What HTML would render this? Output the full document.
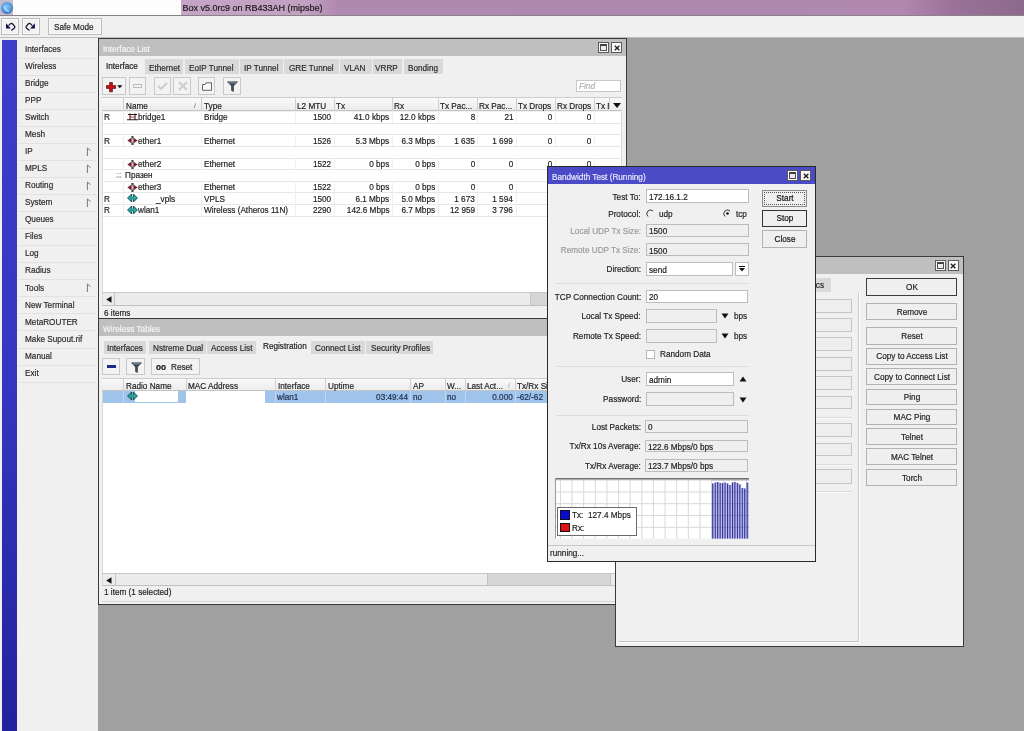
<!DOCTYPE html><html><head><meta charset="utf-8"><style>
*{margin:0;padding:0;box-sizing:border-box}
html,body{width:1024px;height:731px;overflow:hidden;background:#a0a0a0}
body{filter:blur(0.35px)}
body{position:relative;font-family:"Liberation Sans",sans-serif;font-size:9.5px;color:#1e1e1e}
.a{position:absolute}
.t{line-height:12px;white-space:nowrap;transform:scaleX(.862);transform-origin:0 0;-webkit-text-stroke:0.2px currentColor}
.btn{background:#f2f2f2;border:1px solid #bcbcbc;box-shadow:inset 0 0 0 1px #fafafa}
.inp{background:#fff;border:1px solid #b4b4b4}
.inpd{background:#efefef;border:1px solid #b4b4b4}
.tab{background:#dcdcdc}
.gray{color:#8a8a8a}
</style></head><body><div class="a" style="left:0;top:0;width:1024px;height:15px;background:linear-gradient(90deg,#c9aac9 0%,#c2a0c2 30%,#b089b0 33%,#ae88ae 60%,#b088b0 88%,#9a729a 93%,#8c6a8c 100%)"></div>
<div class="a " style="left:13px;top:0px;width:168px;height:14.5px;background:#fdfdfd"></div>
<div class="a " style="left:0px;top:0px;width:13px;height:14.5px;background:#c4bccc"></div>
<div class="a" style="left:1px;top:1.6px;width:11.7px;height:12.1px;border-radius:50%;background:radial-gradient(circle at 45% 40%,#8cc8f6 0%,#5a9ee6 45%,#2a62b8 80%,#1d4c98 100%)"></div>
<svg class="a" style="left:1px;top:1.6px" width="12" height="12" viewBox="0 0 12 12"><path d="M3 4 Q4 8 8 9.5" stroke="#c8ecff" stroke-width="1.2" fill="none" opacity="0.8"/></svg>
<div class="a t " style="left:182.5px;top:1.71px;font-size:9px;transform:none;color:#202020">Box v5.0rc9 on RB433AH (mipsbe)</div>
<div class="a " style="left:0px;top:14.5px;width:1024px;height:1.5px;background:#8a828a"></div>
<div class="a " style="left:0px;top:16px;width:1024px;height:22px;background:#f0f0f0"></div>
<div class="a btn" style="left:1.1px;top:18.1px;width:18px;height:17.2px;"></div>
<div class="a btn" style="left:21.9px;top:18.1px;width:17.9px;height:17.2px;"></div>
<div class="a btn" style="left:47.8px;top:18.2px;width:54px;height:17.2px;"></div>
<div class="a t " style="left:53.7px;top:20.71px;color:#222">Safe Mode</div>
<svg class="a" style="left:0;top:14px" width="44" height="26" viewBox="0 14 44 26"><path d="M6 23.3 L6 28.4 L10.8 28.4 Z" fill="#10104a"/><path d="M8.6 25.6 Q10.6 22.6 12.2 23.6 L14.8 26.6 Q15 27.4 14.2 28.2 L11.4 30.4" stroke="#1a1a40" stroke-width="1.3" fill="none"/><path d="M34.9 23.3 L34.9 28.4 L30.1 28.4 Z" fill="#10104a"/><path d="M32.3 25.6 Q30.3 22.6 28.7 23.6 L26.1 26.6 Q25.9 27.4 26.7 28.2 L29.5 30.4" stroke="#1a1a40" stroke-width="1.3" fill="none"/></svg>
<div class="a " style="left:0px;top:37px;width:1024px;height:1px;background:#bdbdbd"></div>
<div class="a " style="left:0px;top:38px;width:98px;height:693px;background:#f0f0f0"></div>
<div class="a" style="left:2px;top:40px;width:15px;height:691px;background:linear-gradient(180deg,#3e3ec8 0%,#3535c0 50%,#22229e 100%)"></div>
<div class="a t " style="left:25px;top:42.71px;color:#2a2a2a">Interfaces</div>
<div class="a " style="left:18px;top:57.5px;width:78px;height:1px;background:#e2e2e2"></div>
<div class="a t " style="left:25px;top:59.77px;color:#2a2a2a">Wireless</div>
<div class="a " style="left:18px;top:74.56px;width:78px;height:1px;background:#e2e2e2"></div>
<div class="a t " style="left:25px;top:76.83px;color:#2a2a2a">Bridge</div>
<div class="a " style="left:18px;top:91.62px;width:78px;height:1px;background:#e2e2e2"></div>
<div class="a t " style="left:25px;top:93.89px;color:#2a2a2a">PPP</div>
<div class="a " style="left:18px;top:108.68px;width:78px;height:1px;background:#e2e2e2"></div>
<div class="a t " style="left:25px;top:110.95px;color:#2a2a2a">Switch</div>
<div class="a " style="left:18px;top:125.74000000000001px;width:78px;height:1px;background:#e2e2e2"></div>
<div class="a t " style="left:25px;top:128.01px;color:#2a2a2a">Mesh</div>
<div class="a " style="left:18px;top:142.8px;width:78px;height:1px;background:#e2e2e2"></div>
<div class="a t " style="left:25px;top:145.07px;color:#2a2a2a">IP</div>
<div class="a " style="left:18px;top:159.85999999999999px;width:78px;height:1px;background:#e2e2e2"></div>
<svg class="a" style="left:86px;top:147.0px" width="5" height="9" viewBox="0 0 5 9"><path d="M1.4 9 V1 L4.5 3.5" stroke="#6a6a6a" stroke-width="0.9" fill="none"/></svg>
<div class="a t " style="left:25px;top:162.13px;color:#2a2a2a">MPLS</div>
<div class="a " style="left:18px;top:176.92px;width:78px;height:1px;background:#e2e2e2"></div>
<svg class="a" style="left:86px;top:164.0px" width="5" height="9" viewBox="0 0 5 9"><path d="M1.4 9 V1 L4.5 3.5" stroke="#6a6a6a" stroke-width="0.9" fill="none"/></svg>
<div class="a t " style="left:25px;top:179.19px;color:#2a2a2a">Routing</div>
<div class="a " style="left:18px;top:193.98px;width:78px;height:1px;background:#e2e2e2"></div>
<svg class="a" style="left:86px;top:181.1px" width="5" height="9" viewBox="0 0 5 9"><path d="M1.4 9 V1 L4.5 3.5" stroke="#6a6a6a" stroke-width="0.9" fill="none"/></svg>
<div class="a t " style="left:25px;top:196.25px;color:#2a2a2a">System</div>
<div class="a " style="left:18px;top:211.04px;width:78px;height:1px;background:#e2e2e2"></div>
<svg class="a" style="left:86px;top:198.1px" width="5" height="9" viewBox="0 0 5 9"><path d="M1.4 9 V1 L4.5 3.5" stroke="#6a6a6a" stroke-width="0.9" fill="none"/></svg>
<div class="a t " style="left:25px;top:213.31px;color:#2a2a2a">Queues</div>
<div class="a " style="left:18px;top:228.1px;width:78px;height:1px;background:#e2e2e2"></div>
<div class="a t " style="left:25px;top:230.37px;color:#2a2a2a">Files</div>
<div class="a " style="left:18px;top:245.16px;width:78px;height:1px;background:#e2e2e2"></div>
<div class="a t " style="left:25px;top:247.43px;color:#2a2a2a">Log</div>
<div class="a " style="left:18px;top:262.21999999999997px;width:78px;height:1px;background:#e2e2e2"></div>
<div class="a t " style="left:25px;top:264.49px;color:#2a2a2a">Radius</div>
<div class="a " style="left:18px;top:279.28px;width:78px;height:1px;background:#e2e2e2"></div>
<div class="a t " style="left:25px;top:281.55px;color:#2a2a2a">Tools</div>
<div class="a " style="left:18px;top:296.34px;width:78px;height:1px;background:#e2e2e2"></div>
<svg class="a" style="left:86px;top:283.4px" width="5" height="9" viewBox="0 0 5 9"><path d="M1.4 9 V1 L4.5 3.5" stroke="#6a6a6a" stroke-width="0.9" fill="none"/></svg>
<div class="a t " style="left:25px;top:298.61px;color:#2a2a2a">New Terminal</div>
<div class="a " style="left:18px;top:313.4px;width:78px;height:1px;background:#e2e2e2"></div>
<div class="a t " style="left:25px;top:315.67px;color:#2a2a2a">MetaROUTER</div>
<div class="a " style="left:18px;top:330.46px;width:78px;height:1px;background:#e2e2e2"></div>
<div class="a t " style="left:25px;top:332.73px;color:#2a2a2a">Make Supout.rif</div>
<div class="a " style="left:18px;top:347.52px;width:78px;height:1px;background:#e2e2e2"></div>
<div class="a t " style="left:25px;top:349.79px;color:#2a2a2a">Manual</div>
<div class="a " style="left:18px;top:364.58px;width:78px;height:1px;background:#e2e2e2"></div>
<div class="a t " style="left:25px;top:366.85px;color:#2a2a2a">Exit</div>
<div class="a " style="left:18px;top:381.64px;width:78px;height:1px;background:#e2e2e2"></div>
<div class="a " style="left:98px;top:38px;width:529px;height:281px;background:#f0f0f0;border:1px solid #3a3a3a"></div>
<div class="a " style="left:99px;top:39px;width:527px;height:16.5px;background:#bfbfbf"></div>
<div class="a t " style="left:102.8px;top:42.81px;color:#f4f4f4">Interface List</div>
<div class="a" style="left:598.2px;top:42.3px;width:11.2px;height:11px;background:#fafafa;border:1px solid #5a5a5a"><div class="a" style="left:1px;top:0.9px;width:7.2px;height:6.8px;border:1px solid #505050;border-top:2px solid #404040;background:#efe8f2"></div></div>
<div class="a" style="left:611.3000000000001px;top:42.3px;width:11.2px;height:11px;background:#fafafa;border:1px solid #5a5a5a"><svg class="a" style="left:1.7px;top:1.6px" width="6.2" height="6" viewBox="0 0 7 7"><path d="M0.8 0.8 L6.2 6.2 M6.2 0.8 L0.8 6.2" stroke="#222" stroke-width="1.6"/></svg></div>
<div class="a t " style="left:106.3px;top:59.61px;color:#1a1a1a">Interface</div>
<div class="a " style="left:145px;top:58.7px;width:38.400000000000006px;height:15.5px;background:#d9d9d9"></div>
<div class="a t " style="left:149px;top:61.81px;color:#2a2a2a">Ethernet</div>
<div class="a " style="left:184.7px;top:58.7px;width:54.10000000000002px;height:15.5px;background:#d9d9d9"></div>
<div class="a t " style="left:188.7px;top:61.81px;color:#2a2a2a">EoIP Tunnel</div>
<div class="a " style="left:240px;top:58.7px;width:43px;height:15.5px;background:#d9d9d9"></div>
<div class="a t " style="left:244px;top:61.81px;color:#2a2a2a">IP Tunnel</div>
<div class="a " style="left:284.4px;top:58.7px;width:54.60000000000002px;height:15.5px;background:#d9d9d9"></div>
<div class="a t " style="left:288.9px;top:61.81px;color:#2a2a2a">GRE Tunnel</div>
<div class="a " style="left:340.4px;top:58.7px;width:31.600000000000023px;height:15.5px;background:#d9d9d9"></div>
<div class="a t " style="left:344.3px;top:61.81px;color:#2a2a2a">VLAN</div>
<div class="a " style="left:372.7px;top:58.7px;width:29.5px;height:15.5px;background:#d9d9d9"></div>
<div class="a t " style="left:375.3px;top:61.81px;color:#2a2a2a">VRRP</div>
<div class="a " style="left:403.5px;top:58.7px;width:39.60000000000002px;height:15.5px;background:#d9d9d9"></div>
<div class="a t " style="left:408px;top:61.81px;color:#2a2a2a">Bonding</div>
<div class="a" style="left:101.8px;top:77.4px;width:24.0px;height:18.1px;background:#f3f3f3;border:1px solid #c9c9c9"><svg class="a" style="left:3.3px;top:3.6px" width="18" height="11" viewBox="0 0 18 11"><path d="M3.6 0.5 H6.4 V3.6 H9.6 V6.4 H6.4 V9.8 H3.6 V6.4 H0.4 V3.6 H3.6 Z" fill="#c81414" stroke="#501010" stroke-width="0.7"/><path d="M11.2 3.2 H16.4 L13.8 6.2 Z" fill="#111"/></svg></div>
<div class="a" style="left:128.5px;top:77.4px;width:17.2px;height:18.1px;background:#f3f3f3;border:1px solid #c9c9c9"><div class="a" style="left:3px;top:5.5px;width:9px;height:4px;border:1px solid #bdbdbd"></div></div>
<div class="a" style="left:153.5px;top:77.4px;width:17.1px;height:18.1px;background:#f3f3f3;border:1px solid #c9c9c9"><svg class="a" style="left:2.5px;top:3px" width="11" height="10" viewBox="0 0 11 10"><path d="M1 5 L4 8 L10 2" stroke="#cfcfcf" stroke-width="2.2" fill="none"/></svg></div>
<div class="a" style="left:173px;top:77.4px;width:18.0px;height:18.1px;background:#f3f3f3;border:1px solid #c9c9c9"><svg class="a" style="left:3.5px;top:3px" width="10" height="10" viewBox="0 0 10 10"><path d="M1 1 L9 9 M9 1 L1 9" stroke="#cfcfcf" stroke-width="2.4" fill="none"/></svg></div>
<div class="a" style="left:198px;top:77.4px;width:17.0px;height:18.1px;background:#f3f3f3;border:1px solid #c9c9c9"><svg class="a" style="left:3px;top:3.5px" width="10" height="9" viewBox="0 0 10 9"><path d="M0.5 2.5 H3 L4 0.8 H9.5 V8.3 H0.5 Z" stroke="#555" stroke-width="0.9" fill="#f8f8f8"/></svg></div>
<div class="a" style="left:223px;top:77.4px;width:17.5px;height:18.1px;background:#f3f3f3;border:1px solid #c9c9c9"><svg class="a" style="left:3px;top:2.5px" width="11" height="11" viewBox="0 0 11 11"><path d="M0.5 0.8 H10.5 L6.5 5 V10.5 L4.5 9.5 V5 Z" fill="#3a4a5a" stroke="#222" stroke-width="0.5"/><path d="M2 1.8 H9" stroke="#9ab" stroke-width="0.8"/></svg></div>
<div class="a " style="left:575.8px;top:79.9px;width:45.4px;height:12.6px;background:#fff;border:1px solid #c8c8c8"></div>
<div class="a t " style="left:579px;top:80.31px;color:#b0b0b0;font-style:italic">Find</div>
<div class="a " style="left:101.8px;top:97.3px;width:520.5px;height:14.2px;background:linear-gradient(#fafafa,#ececec);border-top:1px solid #cdcdcd;border-bottom:1px solid #c4c4c4"></div>
<div class="a " style="left:123.3px;top:98.3px;width:1px;height:12.5px;background:#d0d0d0"></div>
<div class="a " style="left:201.3px;top:98.3px;width:1px;height:12.5px;background:#d0d0d0"></div>
<div class="a " style="left:294.5px;top:98.3px;width:1px;height:12.5px;background:#d0d0d0"></div>
<div class="a " style="left:333.5px;top:98.3px;width:1px;height:12.5px;background:#d0d0d0"></div>
<div class="a " style="left:391.5px;top:98.3px;width:1px;height:12.5px;background:#d0d0d0"></div>
<div class="a " style="left:437.8px;top:98.3px;width:1px;height:12.5px;background:#d0d0d0"></div>
<div class="a " style="left:476.9px;top:98.3px;width:1px;height:12.5px;background:#d0d0d0"></div>
<div class="a " style="left:515.7px;top:98.3px;width:1px;height:12.5px;background:#d0d0d0"></div>
<div class="a " style="left:554.7px;top:98.3px;width:1px;height:12.5px;background:#d0d0d0"></div>
<div class="a " style="left:593.5px;top:98.3px;width:1px;height:12.5px;background:#d0d0d0"></div>
<div class="a " style="left:609.3px;top:98.3px;width:1px;height:12.5px;background:#d0d0d0"></div>
<div class="a t" style="left:595.5px;top:99.7px;width:15.6px;overflow:hidden;color:#222">Tx Bytes</div>
<div class="a t " style="left:125.5px;top:99.71px;color:#222">Name</div>
<div class="a t " style="left:203.5px;top:99.71px;color:#222">Type</div>
<div class="a t " style="left:296.5px;top:99.71px;color:#222">L2 MTU</div>
<div class="a t " style="left:335.5px;top:99.71px;color:#222">Tx</div>
<div class="a t " style="left:393.5px;top:99.71px;color:#222">Rx</div>
<div class="a t " style="left:439.8px;top:99.71px;color:#222">Tx Pac...</div>
<div class="a t " style="left:478.8px;top:99.71px;color:#222">Rx Pac...</div>
<div class="a t " style="left:517.5px;top:99.71px;color:#222">Tx Drops</div>
<div class="a t " style="left:556.5px;top:99.71px;color:#222">Rx Drops</div>
<div class="a t " style="left:194px;top:99.71px;color:#888;font-size:8px">/</div>
<svg class="a" style="left:611.5px;top:102px" width="10" height="7" viewBox="0 0 10 7"><path d="M1 1 H9 L5 6 Z" fill="#111"/></svg>
<div class="a " style="left:609.3px;top:98.3px;width:1px;height:12.5px;background:#d0d0d0"></div>
<div class="a " style="left:101.8px;top:111.5px;width:520.5px;height:181px;background:#fff;border-left:1px solid #d8d8d8;border-right:1px solid #d8d8d8"></div>
<div class="a " style="left:102.5px;top:122.55000000000001px;width:519.8px;height:1px;background:#e6e6e6"></div>
<div class="a " style="left:102.5px;top:134.20000000000002px;width:519.8px;height:1px;background:#e6e6e6"></div>
<div class="a " style="left:102.5px;top:145.85000000000002px;width:519.8px;height:1px;background:#e6e6e6"></div>
<div class="a " style="left:102.5px;top:157.5px;width:519.8px;height:1px;background:#e6e6e6"></div>
<div class="a " style="left:102.5px;top:169.15px;width:519.8px;height:1px;background:#e6e6e6"></div>
<div class="a " style="left:102.5px;top:180.8px;width:519.8px;height:1px;background:#e6e6e6"></div>
<div class="a " style="left:102.5px;top:192.45px;width:519.8px;height:1px;background:#e6e6e6"></div>
<div class="a " style="left:102.5px;top:204.10000000000002px;width:519.8px;height:1px;background:#e6e6e6"></div>
<div class="a " style="left:102.5px;top:215.75px;width:519.8px;height:1px;background:#e6e6e6"></div>
<div class="a " style="left:123.3px;top:111.4px;width:1px;height:11.65px;background:#efefef"></div>
<div class="a " style="left:201.3px;top:111.4px;width:1px;height:11.65px;background:#efefef"></div>
<div class="a " style="left:294.5px;top:111.4px;width:1px;height:11.65px;background:#efefef"></div>
<div class="a " style="left:333.5px;top:111.4px;width:1px;height:11.65px;background:#efefef"></div>
<div class="a " style="left:391.5px;top:111.4px;width:1px;height:11.65px;background:#efefef"></div>
<div class="a " style="left:437.8px;top:111.4px;width:1px;height:11.65px;background:#efefef"></div>
<div class="a " style="left:476.9px;top:111.4px;width:1px;height:11.65px;background:#efefef"></div>
<div class="a " style="left:515.7px;top:111.4px;width:1px;height:11.65px;background:#efefef"></div>
<div class="a " style="left:554.7px;top:111.4px;width:1px;height:11.65px;background:#efefef"></div>
<div class="a " style="left:593.5px;top:111.4px;width:1px;height:11.65px;background:#efefef"></div>
<div class="a " style="left:123.3px;top:134.70000000000002px;width:1px;height:11.65px;background:#efefef"></div>
<div class="a " style="left:201.3px;top:134.70000000000002px;width:1px;height:11.65px;background:#efefef"></div>
<div class="a " style="left:294.5px;top:134.70000000000002px;width:1px;height:11.65px;background:#efefef"></div>
<div class="a " style="left:333.5px;top:134.70000000000002px;width:1px;height:11.65px;background:#efefef"></div>
<div class="a " style="left:391.5px;top:134.70000000000002px;width:1px;height:11.65px;background:#efefef"></div>
<div class="a " style="left:437.8px;top:134.70000000000002px;width:1px;height:11.65px;background:#efefef"></div>
<div class="a " style="left:476.9px;top:134.70000000000002px;width:1px;height:11.65px;background:#efefef"></div>
<div class="a " style="left:515.7px;top:134.70000000000002px;width:1px;height:11.65px;background:#efefef"></div>
<div class="a " style="left:554.7px;top:134.70000000000002px;width:1px;height:11.65px;background:#efefef"></div>
<div class="a " style="left:593.5px;top:134.70000000000002px;width:1px;height:11.65px;background:#efefef"></div>
<div class="a " style="left:123.3px;top:158.0px;width:1px;height:11.65px;background:#efefef"></div>
<div class="a " style="left:201.3px;top:158.0px;width:1px;height:11.65px;background:#efefef"></div>
<div class="a " style="left:294.5px;top:158.0px;width:1px;height:11.65px;background:#efefef"></div>
<div class="a " style="left:333.5px;top:158.0px;width:1px;height:11.65px;background:#efefef"></div>
<div class="a " style="left:391.5px;top:158.0px;width:1px;height:11.65px;background:#efefef"></div>
<div class="a " style="left:437.8px;top:158.0px;width:1px;height:11.65px;background:#efefef"></div>
<div class="a " style="left:476.9px;top:158.0px;width:1px;height:11.65px;background:#efefef"></div>
<div class="a " style="left:515.7px;top:158.0px;width:1px;height:11.65px;background:#efefef"></div>
<div class="a " style="left:554.7px;top:158.0px;width:1px;height:11.65px;background:#efefef"></div>
<div class="a " style="left:593.5px;top:158.0px;width:1px;height:11.65px;background:#efefef"></div>
<div class="a " style="left:123.3px;top:181.3px;width:1px;height:11.65px;background:#efefef"></div>
<div class="a " style="left:201.3px;top:181.3px;width:1px;height:11.65px;background:#efefef"></div>
<div class="a " style="left:294.5px;top:181.3px;width:1px;height:11.65px;background:#efefef"></div>
<div class="a " style="left:333.5px;top:181.3px;width:1px;height:11.65px;background:#efefef"></div>
<div class="a " style="left:391.5px;top:181.3px;width:1px;height:11.65px;background:#efefef"></div>
<div class="a " style="left:437.8px;top:181.3px;width:1px;height:11.65px;background:#efefef"></div>
<div class="a " style="left:476.9px;top:181.3px;width:1px;height:11.65px;background:#efefef"></div>
<div class="a " style="left:515.7px;top:181.3px;width:1px;height:11.65px;background:#efefef"></div>
<div class="a " style="left:554.7px;top:181.3px;width:1px;height:11.65px;background:#efefef"></div>
<div class="a " style="left:593.5px;top:181.3px;width:1px;height:11.65px;background:#efefef"></div>
<div class="a " style="left:123.3px;top:192.95px;width:1px;height:11.65px;background:#efefef"></div>
<div class="a " style="left:201.3px;top:192.95px;width:1px;height:11.65px;background:#efefef"></div>
<div class="a " style="left:294.5px;top:192.95px;width:1px;height:11.65px;background:#efefef"></div>
<div class="a " style="left:333.5px;top:192.95px;width:1px;height:11.65px;background:#efefef"></div>
<div class="a " style="left:391.5px;top:192.95px;width:1px;height:11.65px;background:#efefef"></div>
<div class="a " style="left:437.8px;top:192.95px;width:1px;height:11.65px;background:#efefef"></div>
<div class="a " style="left:476.9px;top:192.95px;width:1px;height:11.65px;background:#efefef"></div>
<div class="a " style="left:515.7px;top:192.95px;width:1px;height:11.65px;background:#efefef"></div>
<div class="a " style="left:554.7px;top:192.95px;width:1px;height:11.65px;background:#efefef"></div>
<div class="a " style="left:593.5px;top:192.95px;width:1px;height:11.65px;background:#efefef"></div>
<div class="a " style="left:123.3px;top:204.60000000000002px;width:1px;height:11.65px;background:#efefef"></div>
<div class="a " style="left:201.3px;top:204.60000000000002px;width:1px;height:11.65px;background:#efefef"></div>
<div class="a " style="left:294.5px;top:204.60000000000002px;width:1px;height:11.65px;background:#efefef"></div>
<div class="a " style="left:333.5px;top:204.60000000000002px;width:1px;height:11.65px;background:#efefef"></div>
<div class="a " style="left:391.5px;top:204.60000000000002px;width:1px;height:11.65px;background:#efefef"></div>
<div class="a " style="left:437.8px;top:204.60000000000002px;width:1px;height:11.65px;background:#efefef"></div>
<div class="a " style="left:476.9px;top:204.60000000000002px;width:1px;height:11.65px;background:#efefef"></div>
<div class="a " style="left:515.7px;top:204.60000000000002px;width:1px;height:11.65px;background:#efefef"></div>
<div class="a " style="left:554.7px;top:204.60000000000002px;width:1px;height:11.65px;background:#efefef"></div>
<div class="a " style="left:593.5px;top:204.60000000000002px;width:1px;height:11.65px;background:#efefef"></div>
<div class="a t " style="left:104.3px;top:111.21px;color:#222">R</div>
<svg class="a" style="left:126.5px;top:113.4px" width="11" height="8" viewBox="0 0 11 8"><path d="M1 1.5 H10 M0 6.8 H11 M3 0.5 V6.8 M8 0.5 V6.8" stroke="#3a1414" stroke-width="1.1" fill="none"/><path d="M3.5 4 H7.5" stroke="#b03030" stroke-width="0.9" fill="none"/></svg>
<div class="a t " style="left:137.6px;top:111.21px;color:#222">bridge1</div>
<div class="a t " style="left:203.5px;top:111.21px;color:#222">Bridge</div>
<div class="a t " style="right:692.4px;top:111.21px;text-align:right;transform-origin:100% 0;color:#222">1500</div>
<div class="a t " style="right:634.8px;top:111.21px;text-align:right;transform-origin:100% 0;color:#222">41.0 kbps</div>
<div class="a t " style="right:588.8px;top:111.21px;text-align:right;transform-origin:100% 0;color:#222">12.0 kbps</div>
<div class="a t " style="right:549.2px;top:111.21px;text-align:right;transform-origin:100% 0;color:#222">8</div>
<div class="a t " style="right:510.79999999999995px;top:111.21px;text-align:right;transform-origin:100% 0;color:#222">21</div>
<div class="a t " style="right:471.79999999999995px;top:111.21px;text-align:right;transform-origin:100% 0;color:#222">0</div>
<div class="a t " style="right:432.29999999999995px;top:111.21px;text-align:right;transform-origin:100% 0;color:#222">0</div>
<div class="a t " style="left:104.3px;top:134.51px;color:#222">R</div>
<svg class="a" style="left:126.5px;top:136.20000000000002px" width="11" height="9" viewBox="0 0 11 9"><path d="M0.4 4.5 L4.2 1.8 V7.2 Z" fill="#8a1832"/><path d="M10.6 4.5 L6.8 1.8 V7.2 Z" fill="#8a1832"/><rect x="4.4" y="0" width="2.2" height="9" fill="#404a44"/><rect x="5.0" y="2.5" width="1" height="4" fill="#c8c8c8"/></svg>
<div class="a t " style="left:137.6px;top:134.51px;color:#222">ether1</div>
<div class="a t " style="left:203.5px;top:134.51px;color:#222">Ethernet</div>
<div class="a t " style="right:692.4px;top:134.51px;text-align:right;transform-origin:100% 0;color:#222">1526</div>
<div class="a t " style="right:634.8px;top:134.51px;text-align:right;transform-origin:100% 0;color:#222">5.3 Mbps</div>
<div class="a t " style="right:588.8px;top:134.51px;text-align:right;transform-origin:100% 0;color:#222">6.3 Mbps</div>
<div class="a t " style="right:549.2px;top:134.51px;text-align:right;transform-origin:100% 0;color:#222">1 635</div>
<div class="a t " style="right:510.79999999999995px;top:134.51px;text-align:right;transform-origin:100% 0;color:#222">1 699</div>
<div class="a t " style="right:471.79999999999995px;top:134.51px;text-align:right;transform-origin:100% 0;color:#222">0</div>
<div class="a t " style="right:432.29999999999995px;top:134.51px;text-align:right;transform-origin:100% 0;color:#222">0</div>
<svg class="a" style="left:126.5px;top:159.5px" width="11" height="9" viewBox="0 0 11 9"><path d="M0.4 4.5 L4.2 1.8 V7.2 Z" fill="#8a1832"/><path d="M10.6 4.5 L6.8 1.8 V7.2 Z" fill="#8a1832"/><rect x="4.4" y="0" width="2.2" height="9" fill="#404a44"/><rect x="5.0" y="2.5" width="1" height="4" fill="#c8c8c8"/></svg>
<div class="a t " style="left:137.6px;top:157.81px;color:#222">ether2</div>
<div class="a t " style="left:203.5px;top:157.81px;color:#222">Ethernet</div>
<div class="a t " style="right:692.4px;top:157.81px;text-align:right;transform-origin:100% 0;color:#222">1522</div>
<div class="a t " style="right:634.8px;top:157.81px;text-align:right;transform-origin:100% 0;color:#222">0 bps</div>
<div class="a t " style="right:588.8px;top:157.81px;text-align:right;transform-origin:100% 0;color:#222">0 bps</div>
<div class="a t " style="right:549.2px;top:157.81px;text-align:right;transform-origin:100% 0;color:#222">0</div>
<div class="a t " style="right:510.79999999999995px;top:157.81px;text-align:right;transform-origin:100% 0;color:#222">0</div>
<div class="a t " style="right:471.79999999999995px;top:157.81px;text-align:right;transform-origin:100% 0;color:#222">0</div>
<div class="a t " style="right:432.29999999999995px;top:157.81px;text-align:right;transform-origin:100% 0;color:#222">0</div>
<div class="a t " style="left:116px;top:169.46px;color:#888;font-size:8px">;;;</div>
<div class="a t " style="left:125px;top:169.46px;color:#222">Празен</div>
<svg class="a" style="left:126.5px;top:182.8px" width="11" height="9" viewBox="0 0 11 9"><path d="M0.4 4.5 L4.2 1.8 V7.2 Z" fill="#8a1832"/><path d="M10.6 4.5 L6.8 1.8 V7.2 Z" fill="#8a1832"/><rect x="4.4" y="0" width="2.2" height="9" fill="#404a44"/><rect x="5.0" y="2.5" width="1" height="4" fill="#c8c8c8"/></svg>
<div class="a t " style="left:137.6px;top:181.11px;color:#222">ether3</div>
<div class="a t " style="left:203.5px;top:181.11px;color:#222">Ethernet</div>
<div class="a t " style="right:692.4px;top:181.11px;text-align:right;transform-origin:100% 0;color:#222">1522</div>
<div class="a t " style="right:634.8px;top:181.11px;text-align:right;transform-origin:100% 0;color:#222">0 bps</div>
<div class="a t " style="right:588.8px;top:181.11px;text-align:right;transform-origin:100% 0;color:#222">0 bps</div>
<div class="a t " style="right:549.2px;top:181.11px;text-align:right;transform-origin:100% 0;color:#222">0</div>
<div class="a t " style="right:510.79999999999995px;top:181.11px;text-align:right;transform-origin:100% 0;color:#222">0</div>
<div class="a t " style="left:104.3px;top:192.76px;color:#222">R</div>
<svg class="a" style="left:126.5px;top:192.95px" width="11" height="10" viewBox="0 0 11 10"><path d="M0.6 5 L4.6 1 V9 Z M10.4 5 L6.4 1 V9 Z" fill="#2aa8a0" stroke="#10404a" stroke-width="0.9" stroke-linejoin="round"/><rect x="4.2" y="3.6" width="2.6" height="2.8" fill="#2aa8a0"/></svg>
<div class="a t " style="left:137.6px;top:192.76px;color:#222"></div>
<div class="a t " style="left:203.5px;top:192.76px;color:#222">VPLS</div>
<div class="a t " style="right:692.4px;top:192.76px;text-align:right;transform-origin:100% 0;color:#222">1500</div>
<div class="a t " style="right:634.8px;top:192.76px;text-align:right;transform-origin:100% 0;color:#222">6.1 Mbps</div>
<div class="a t " style="right:588.8px;top:192.76px;text-align:right;transform-origin:100% 0;color:#222">5.0 Mbps</div>
<div class="a t " style="right:549.2px;top:192.76px;text-align:right;transform-origin:100% 0;color:#222">1 673</div>
<div class="a t " style="right:510.79999999999995px;top:192.76px;text-align:right;transform-origin:100% 0;color:#222">1 594</div>
<div class="a t " style="left:156px;top:192.76px;color:#222">_vpls</div>
<div class="a t " style="left:104.3px;top:204.41px;color:#222">R</div>
<svg class="a" style="left:126.5px;top:204.60000000000002px" width="11" height="10" viewBox="0 0 11 10"><path d="M0.6 5 L4.6 1 V9 Z M10.4 5 L6.4 1 V9 Z" fill="#2aa8a0" stroke="#10404a" stroke-width="0.9" stroke-linejoin="round"/><rect x="4.2" y="3.6" width="2.6" height="2.8" fill="#2aa8a0"/></svg>
<div class="a t " style="left:137.6px;top:204.41px;color:#222">wlan1</div>
<div class="a t " style="left:203.5px;top:204.41px;color:#222">Wireless (Atheros 11N)</div>
<div class="a t " style="right:692.4px;top:204.41px;text-align:right;transform-origin:100% 0;color:#222">2290</div>
<div class="a t " style="right:634.8px;top:204.41px;text-align:right;transform-origin:100% 0;color:#222">142.6 Mbps</div>
<div class="a t " style="right:588.8px;top:204.41px;text-align:right;transform-origin:100% 0;color:#222">6.7 Mbps</div>
<div class="a t " style="right:549.2px;top:204.41px;text-align:right;transform-origin:100% 0;color:#222">12 959</div>
<div class="a t " style="right:510.79999999999995px;top:204.41px;text-align:right;transform-origin:100% 0;color:#222">3 796</div>
<div class="a " style="left:101.8px;top:292px;width:520.5px;height:13.5px;background:#ececec;border-top:1px solid #c8c8c8;border-bottom:1px solid #c0c0c0;border-left:1px solid #d8d8d8"></div>
<div class="a " style="left:114.3px;top:293px;width:1px;height:12px;background:#c4c4c4"></div>
<svg class="a" style="left:106px;top:296px" width="6" height="7" viewBox="0 0 6 7"><path d="M0.2 3.5 L5.5 0.3 V6.7 Z" fill="#111"/></svg>
<div class="a " style="left:529.8px;top:293px;width:81px;height:12px;background:#d6d6d6;border-left:1px solid #c4c4c4;border-right:1px solid #c4c4c4"></div>
<div class="a t " style="left:103.7px;top:306.51px;color:#222">6 items</div>
<div class="a " style="left:98px;top:318px;width:529px;height:287px;background:#f0f0f0;border:1px solid #3a3a3a"></div>
<div class="a " style="left:99px;top:319px;width:527px;height:16.5px;background:#bfbfbf"></div>
<div class="a t " style="left:102.8px;top:322.81px;color:#f4f4f4">Wireless Tables</div>
<div class="a" style="left:598.2px;top:322.3px;width:11.2px;height:11px;background:#fafafa;border:1px solid #5a5a5a"><div class="a" style="left:1px;top:0.9px;width:7.2px;height:6.8px;border:1px solid #505050;border-top:2px solid #404040;background:#efe8f2"></div></div>
<div class="a" style="left:611.3000000000001px;top:322.3px;width:11.2px;height:11px;background:#fafafa;border:1px solid #5a5a5a"><svg class="a" style="left:1.7px;top:1.6px" width="6.2" height="6" viewBox="0 0 7 7"><path d="M0.8 0.8 L6.2 6.2 M6.2 0.8 L0.8 6.2" stroke="#222" stroke-width="1.6"/></svg></div>
<div class="a " style="left:103.5px;top:340.5px;width:42.900000000000006px;height:13.300000000000011px;background:#d9d9d9"></div>
<div class="a t " style="left:106.9px;top:341.71px;color:#2a2a2a">Interfaces</div>
<div class="a " style="left:148.8px;top:340.5px;width:57.0px;height:13.300000000000011px;background:#d9d9d9"></div>
<div class="a t " style="left:152.7px;top:341.71px;color:#2a2a2a">Nstreme Dual</div>
<div class="a " style="left:207.4px;top:340.5px;width:48.400000000000006px;height:13.300000000000011px;background:#d9d9d9"></div>
<div class="a t " style="left:211.3px;top:341.71px;color:#2a2a2a">Access List</div>
<div class="a t " style="left:263.3px;top:340.21px;color:#1a1a1a">Registration</div>
<div class="a " style="left:311.25px;top:340.5px;width:53.55000000000001px;height:13.300000000000011px;background:#d9d9d9"></div>
<div class="a t " style="left:314.8px;top:341.71px;color:#2a2a2a">Connect List</div>
<div class="a " style="left:366.4px;top:340.5px;width:66.90000000000003px;height:13.300000000000011px;background:#d9d9d9"></div>
<div class="a t " style="left:371px;top:341.71px;color:#2a2a2a">Security Profiles</div>
<div class="a" style="left:102.4px;top:358.4px;width:17.2px;height:16.9px;background:#f3f3f3;border:1px solid #c9c9c9"><div class="a" style="left:3.5px;top:6px;width:9px;height:3px;background:#1c2a8a"></div></div>
<div class="a" style="left:126.4px;top:358.4px;width:18.2px;height:16.9px;background:#f3f3f3;border:1px solid #c9c9c9"><svg class="a" style="left:3.5px;top:2.5px" width="11" height="11" viewBox="0 0 11 11"><path d="M0.5 0.8 H10.5 L6.5 5 V10.5 L4.5 9.5 V5 Z" fill="#3a4a5a" stroke="#222" stroke-width="0.5"/><path d="M2 1.8 H9" stroke="#9ab" stroke-width="0.8"/></svg></div>
<div class="a" style="left:151.4px;top:358.4px;width:48.9px;height:16.9px;background:#f3f3f3;border:1px solid #c9c9c9"></div>
<div class="a t " style="left:155.8px;top:360.71px;font-weight:bold;color:#111">oo</div>
<div class="a t " style="left:171.4px;top:360.71px;color:#222">Reset</div>
<div class="a " style="left:101.8px;top:378px;width:520.5px;height:12.8px;background:linear-gradient(#fafafa,#ececec);border-top:1px solid #cdcdcd;border-bottom:1px solid #c4c4c4"></div>
<div class="a " style="left:123.3px;top:379px;width:1px;height:11px;background:#d0d0d0"></div>
<div class="a " style="left:185.5px;top:379px;width:1px;height:11px;background:#d0d0d0"></div>
<div class="a " style="left:275px;top:379px;width:1px;height:11px;background:#d0d0d0"></div>
<div class="a " style="left:325px;top:379px;width:1px;height:11px;background:#d0d0d0"></div>
<div class="a " style="left:410.2px;top:379px;width:1px;height:11px;background:#d0d0d0"></div>
<div class="a " style="left:445.4px;top:379px;width:1px;height:11px;background:#d0d0d0"></div>
<div class="a " style="left:464.8px;top:379px;width:1px;height:11px;background:#d0d0d0"></div>
<div class="a " style="left:515.4px;top:379px;width:1px;height:11px;background:#d0d0d0"></div>
<div class="a t " style="left:126.1px;top:379.71px;color:#222">Radio Name</div>
<div class="a t " style="left:188.3px;top:379.71px;color:#222">MAC Address</div>
<div class="a t " style="left:277.8px;top:379.71px;color:#222">Interface</div>
<div class="a t " style="left:328.1px;top:379.71px;color:#222">Uptime</div>
<div class="a t " style="left:412.5px;top:379.71px;color:#222">AP</div>
<div class="a t " style="left:447px;top:379.71px;color:#222">W...</div>
<div class="a t " style="left:467.2px;top:379.71px;color:#222">Last Act...</div>
<div class="a t " style="left:517.3px;top:379.71px;color:#222">Tx/Rx Signal</div>
<div class="a t " style="left:508px;top:379.71px;color:#aaa;font-size:8px">/</div>
<div class="a " style="left:101.8px;top:390.8px;width:520.5px;height:182px;background:#fff;border-left:1px solid #d8d8d8"></div>
<div class="a " style="left:102.5px;top:390.8px;width:520px;height:11.8px;background:#9fc3ea"></div>
<div class="a " style="left:134.7px;top:391px;width:43px;height:10.6px;background:#fff"></div>
<div class="a " style="left:185.5px;top:391px;width:79.3px;height:11.6px;background:#fff"></div>
<svg class="a" style="left:126.5px;top:390.5px" width="11" height="10" viewBox="0 0 11 10"><path d="M0.6 5 L4.6 1 V9 Z M10.4 5 L6.4 1 V9 Z" fill="#2aa8a0" stroke="#10404a" stroke-width="0.9" stroke-linejoin="round"/><rect x="4.2" y="3.6" width="2.6" height="2.8" fill="#2aa8a0"/></svg>
<div class="a t " style="left:277.3px;top:391.21px;color:#1c2c4a">wlan1</div>
<div class="a t " style="right:616px;top:391.21px;text-align:right;transform-origin:100% 0;color:#1c2c4a">03:49:44</div>
<div class="a t " style="left:412.5px;top:391.21px;color:#1c2c4a">no</div>
<div class="a t " style="left:447px;top:391.21px;color:#1c2c4a">no</div>
<div class="a t " style="right:510.79999999999995px;top:391.21px;text-align:right;transform-origin:100% 0;color:#1c2c4a">0.000</div>
<div class="a t " style="left:517.3px;top:391.21px;color:#1c2c4a">-62/-62</div>
<div class="a " style="left:123.3px;top:390.8px;width:1px;height:11.8px;background:rgba(255,255,255,0.35)"></div>
<div class="a " style="left:185.5px;top:390.8px;width:1px;height:11.8px;background:rgba(255,255,255,0.35)"></div>
<div class="a " style="left:275px;top:390.8px;width:1px;height:11.8px;background:rgba(255,255,255,0.35)"></div>
<div class="a " style="left:325px;top:390.8px;width:1px;height:11.8px;background:rgba(255,255,255,0.35)"></div>
<div class="a " style="left:410.2px;top:390.8px;width:1px;height:11.8px;background:rgba(255,255,255,0.35)"></div>
<div class="a " style="left:445.4px;top:390.8px;width:1px;height:11.8px;background:rgba(255,255,255,0.35)"></div>
<div class="a " style="left:464.8px;top:390.8px;width:1px;height:11.8px;background:rgba(255,255,255,0.35)"></div>
<div class="a " style="left:515.4px;top:390.8px;width:1px;height:11.8px;background:rgba(255,255,255,0.35)"></div>
<div class="a " style="left:101.8px;top:572.5px;width:520.5px;height:13.2px;background:#ececec;border-top:1px solid #c8c8c8;border-bottom:1px solid #c0c0c0;border-left:1px solid #d8d8d8"></div>
<div class="a " style="left:114.5px;top:573.5px;width:1px;height:11.5px;background:#c4c4c4"></div>
<svg class="a" style="left:106px;top:576.5px" width="6" height="7" viewBox="0 0 6 7"><path d="M0.2 3.5 L5.5 0.3 V6.7 Z" fill="#111"/></svg>
<div class="a " style="left:486.8px;top:573.5px;width:124px;height:11.5px;background:#d6d6d6;border-left:1px solid #c4c4c4;border-right:1px solid #c4c4c4"></div>
<svg class="a" style="left:614.8px;top:576.5px" width="6" height="7" viewBox="0 0 6 7"><path d="M5.8 3.5 L0.5 0.3 V6.7 Z" fill="#111"/></svg>
<div class="a t " style="left:104.3px;top:586.31px;color:#222">1 item (1 selected)</div>
<div class="a " style="left:101.8px;top:601.3px;width:520.5px;height:1px;background:#d4d4d4"></div>
<div class="a " style="left:615px;top:256px;width:348.5px;height:391px;background:#f0f0f0;border:1px solid #3a3a3a"></div>
<div class="a " style="left:616px;top:257px;width:346.5px;height:16.5px;background:#bfbfbf"></div>
<div class="a t " style="left:619.8px;top:260.81px;color:#f4f4f4"></div>
<div class="a" style="left:934.7px;top:260px;width:11.2px;height:11px;background:#fafafa;border:1px solid #5a5a5a"><div class="a" style="left:1px;top:0.9px;width:7.2px;height:6.8px;border:1px solid #505050;border-top:2px solid #404040;background:#efe8f2"></div></div>
<div class="a" style="left:947.8000000000001px;top:260px;width:11.2px;height:11px;background:#fafafa;border:1px solid #5a5a5a"><svg class="a" style="left:1.7px;top:1.6px" width="6.2" height="6" viewBox="0 0 7 7"><path d="M0.8 0.8 L6.2 6.2 M6.2 0.8 L0.8 6.2" stroke="#222" stroke-width="1.6"/></svg></div>
<div class="a " style="left:815px;top:277.7px;width:15.8px;height:14.8px;background:#d9d9d9"></div>
<div class="a t " style="left:814px;top:279.21px;color:#222">ics</div>
<div class="a " style="left:700px;top:298.7px;width:151.6px;height:14.0px;background:#eeeeee;border:1px solid #c6c6c6"></div>
<div class="a " style="left:700px;top:318.2px;width:151.6px;height:13.400000000000034px;background:#eeeeee;border:1px solid #c6c6c6"></div>
<div class="a " style="left:700px;top:337.4px;width:151.6px;height:13.600000000000023px;background:#eeeeee;border:1px solid #c6c6c6"></div>
<div class="a " style="left:700px;top:357px;width:151.6px;height:13.5px;background:#eeeeee;border:1px solid #c6c6c6"></div>
<div class="a " style="left:700px;top:376px;width:151.6px;height:13.699999999999989px;background:#eeeeee;border:1px solid #c6c6c6"></div>
<div class="a " style="left:700px;top:395.5px;width:151.6px;height:13.5px;background:#eeeeee;border:1px solid #c6c6c6"></div>
<div class="a " style="left:700px;top:423px;width:151.6px;height:13.600000000000023px;background:#eeeeee;border:1px solid #c6c6c6"></div>
<div class="a " style="left:700px;top:442.5px;width:151.6px;height:13.5px;background:#eeeeee;border:1px solid #c6c6c6"></div>
<div class="a " style="left:700px;top:469px;width:151.6px;height:14.600000000000023px;background:#eeeeee;border:1px solid #c6c6c6"></div>
<div class="a " style="left:858px;top:292.5px;width:1px;height:349px;background:#c8c8c8"></div>
<div class="a " style="left:816px;top:417.1px;width:36px;height:1px;background:#dadada"></div>
<div class="a " style="left:816px;top:418.1px;width:36px;height:1px;background:#fafafa"></div>
<div class="a " style="left:816px;top:463.6px;width:36px;height:1px;background:#dadada"></div>
<div class="a " style="left:816px;top:464.6px;width:36px;height:1px;background:#fafafa"></div>
<div class="a " style="left:816px;top:490.6px;width:36px;height:1px;background:#dadada"></div>
<div class="a " style="left:816px;top:491.6px;width:36px;height:1px;background:#fafafa"></div>
<div class="a " style="left:618.5px;top:641px;width:240.5px;height:1px;background:#c4c4c4"></div>
<div class="a " style="left:618.5px;top:642px;width:241px;height:1px;background:#fff"></div>
<div class="a " style="left:859px;top:292.5px;width:1px;height:350px;background:#fff"></div>
<div class="a" style="left:866.2px;top:278.1px;width:90.5px;height:17.5px;background:#efefef;border:1px solid #3c3c3c"></div>
<div class="a t " style="left:811.5px;width:200px;top:280.86px;text-align:center;transform-origin:50% 0;color:#222">OK</div>
<div class="a" style="left:866.2px;top:302.8px;width:90.5px;height:17.5px;background:#efefef;border:1px solid #b2b2b2"></div>
<div class="a t " style="left:811.5px;width:200px;top:305.56px;text-align:center;transform-origin:50% 0;color:#222">Remove</div>
<div class="a" style="left:866.2px;top:327.4px;width:90.5px;height:17.2px;background:#efefef;border:1px solid #b2b2b2"></div>
<div class="a t " style="left:811.5px;width:200px;top:330.01px;text-align:center;transform-origin:50% 0;color:#222">Reset</div>
<div class="a" style="left:866.2px;top:347.8px;width:90.5px;height:17.0px;background:#efefef;border:1px solid #b2b2b2"></div>
<div class="a t " style="left:811.5px;width:200px;top:350.31px;text-align:center;transform-origin:50% 0;color:#222">Copy to Access List</div>
<div class="a" style="left:866.2px;top:368px;width:90.5px;height:17.3px;background:#efefef;border:1px solid #b2b2b2"></div>
<div class="a t " style="left:811.5px;width:200px;top:370.66px;text-align:center;transform-origin:50% 0;color:#222">Copy to Connect List</div>
<div class="a" style="left:866.2px;top:388.5px;width:90.5px;height:16.5px;background:#efefef;border:1px solid #b2b2b2"></div>
<div class="a t " style="left:811.5px;width:200px;top:390.76px;text-align:center;transform-origin:50% 0;color:#222">Ping</div>
<div class="a" style="left:866.2px;top:408.7px;width:90.5px;height:16.7px;background:#efefef;border:1px solid #b2b2b2"></div>
<div class="a t " style="left:811.5px;width:200px;top:411.06px;text-align:center;transform-origin:50% 0;color:#222">MAC Ping</div>
<div class="a" style="left:866.2px;top:428.4px;width:90.5px;height:16.7px;background:#efefef;border:1px solid #b2b2b2"></div>
<div class="a t " style="left:811.5px;width:200px;top:430.76px;text-align:center;transform-origin:50% 0;color:#222">Telnet</div>
<div class="a" style="left:866.2px;top:448px;width:90.5px;height:17.3px;background:#efefef;border:1px solid #b2b2b2"></div>
<div class="a t " style="left:811.5px;width:200px;top:450.66px;text-align:center;transform-origin:50% 0;color:#222">MAC Telnet</div>
<div class="a" style="left:866.2px;top:469px;width:90.5px;height:17.3px;background:#efefef;border:1px solid #b2b2b2"></div>
<div class="a t " style="left:811.5px;width:200px;top:471.66px;text-align:center;transform-origin:50% 0;color:#222">Torch</div>
<div class="a " style="left:547px;top:166px;width:268.8px;height:396.2px;background:#f0f0f0;border:1px solid #2a2a2a"></div>
<div class="a " style="left:548px;top:167px;width:266.8px;height:16.5px;background:#4b4bc7"></div>
<div class="a t " style="left:551.8px;top:170.81px;color:#e8e8ff">Bandwidth Test (Running)</div>
<div class="a" style="left:787.2px;top:170.4px;width:11.2px;height:11px;background:#fafafa;border:1px solid #5a5a5a"><div class="a" style="left:1px;top:0.9px;width:7.2px;height:6.8px;border:1px solid #505050;border-top:2px solid #404040;background:#efe8f2"></div></div>
<div class="a" style="left:800.3000000000001px;top:170.4px;width:11.2px;height:11px;background:#fafafa;border:1px solid #5a5a5a"><svg class="a" style="left:1.7px;top:1.6px" width="6.2" height="6" viewBox="0 0 7 7"><path d="M0.8 0.8 L6.2 6.2 M6.2 0.8 L0.8 6.2" stroke="#222" stroke-width="1.6"/></svg></div>
<div class="a t " style="right:383.1px;top:190.71px;text-align:right;transform-origin:100% 0;color:#222">Test To:</div>
<div class="a" style="left:645.6px;top:189.1px;width:103.0px;height:13.7px;background:#ffffff;border:1px solid #bcbcbc"></div>
<div class="a t " style="left:648.6px;top:190.66px;color:#1a1a1a">172.16.1.2</div>
<div class="a t " style="right:383.1px;top:207.71px;text-align:right;transform-origin:100% 0;color:#222">Protocol:</div>
<svg class="a" style="left:645.5px;top:209px" width="9" height="9" viewBox="0 0 9 9"><path d="M7 2 A3.5 3.5 0 1 0 2 7.5" stroke="#333" stroke-width="1" fill="none"/></svg>
<div class="a t " style="left:659.3px;top:207.71px;color:#222">udp</div>
<svg class="a" style="left:722.5px;top:209px" width="9" height="9" viewBox="0 0 9 9"><path d="M7 2 A3.5 3.5 0 1 0 2 7.5" stroke="#333" stroke-width="1" fill="none"/><circle cx="4.5" cy="4.5" r="1.3" fill="#111"/></svg>
<div class="a t " style="left:735.8px;top:207.71px;color:#222">tcp</div>
<div class="a t " style="right:383.1px;top:225.01px;text-align:right;transform-origin:100% 0;color:#9a9a9a">Local UDP Tx Size:</div>
<div class="a" style="left:645.6px;top:223.6px;width:103.0px;height:13.5px;background:#efefef;border:1px solid #bcbcbc"></div>
<div class="a t " style="left:648.6px;top:225.06px;color:#1a1a1a">1500</div>
<div class="a t " style="right:383.1px;top:244.01px;text-align:right;transform-origin:100% 0;color:#9a9a9a">Remote UDP Tx Size:</div>
<div class="a" style="left:645.6px;top:243.3px;width:103.0px;height:13.2px;background:#efefef;border:1px solid #bcbcbc"></div>
<div class="a t " style="left:648.6px;top:244.61px;color:#1a1a1a">1500</div>
<div class="a t " style="right:383.1px;top:263.21px;text-align:right;transform-origin:100% 0;color:#222">Direction:</div>
<div class="a" style="left:645.6px;top:262.2px;width:87.5px;height:13.6px;background:#ffffff;border:1px solid #bcbcbc"></div>
<div class="a t " style="left:648.6px;top:263.71px;color:#1a1a1a">send</div>
<div class="a" style="left:735.3px;top:262.2px;width:13.3px;height:13.6px;background:#ffffff;border:1px solid #bcbcbc"></div>
<svg class="a" style="left:738px;top:265px" width="8" height="8" viewBox="0 0 8 8"><path d="M1 1.5 H7" stroke="#111" stroke-width="1"/><path d="M1 3 H7 L4 6.5 Z" fill="#111"/></svg>
<div class="a " style="left:555.6px;top:283px;width:193.4px;height:1px;background:#dcdcdc"></div>
<div class="a t " style="right:383.1px;top:290.51px;text-align:right;transform-origin:100% 0;color:#222">TCP Connection Count:</div>
<div class="a" style="left:645.8px;top:289.7px;width:102.7px;height:13.5px;background:#ffffff;border:1px solid #bcbcbc"></div>
<div class="a t " style="left:648.8px;top:291.16px;color:#1a1a1a">20</div>
<div class="a t " style="right:383.1px;top:309.71px;text-align:right;transform-origin:100% 0;color:#222">Local Tx Speed:</div>
<div class="a" style="left:645.8px;top:309px;width:70.9px;height:13.5px;background:#efefef;border:1px solid #bcbcbc"></div>
<svg class="a" style="left:720.5px;top:313px" width="8" height="6" viewBox="0 0 8 6"><path d="M0.5 0.5 H7.5 L4 5.5 Z" fill="#111"/></svg>
<div class="a t " style="left:733.5px;top:309.71px;color:#222">bps</div>
<div class="a t " style="right:383.1px;top:330.01px;text-align:right;transform-origin:100% 0;color:#222">Remote Tx Speed:</div>
<div class="a" style="left:645.8px;top:329.4px;width:70.9px;height:13.3px;background:#efefef;border:1px solid #bcbcbc"></div>
<svg class="a" style="left:720.5px;top:333.3px" width="8" height="6" viewBox="0 0 8 6"><path d="M0.5 0.5 H7.5 L4 5.5 Z" fill="#111"/></svg>
<div class="a t " style="left:733.5px;top:330.01px;color:#222">bps</div>
<div class="a " style="left:645.8px;top:349.8px;width:8.8px;height:9.2px;background:#fff;border:1px solid #b8b8b8"></div>
<div class="a t " style="left:659.8px;top:348.21px;color:#222">Random Data</div>
<div class="a " style="left:555.6px;top:366px;width:193.4px;height:1px;background:#dcdcdc"></div>
<div class="a t " style="right:383.1px;top:373.01px;text-align:right;transform-origin:100% 0;color:#222">User:</div>
<div class="a" style="left:645.8px;top:372px;width:88.5px;height:13.7px;background:#ffffff;border:1px solid #bcbcbc"></div>
<div class="a t " style="left:648.8px;top:373.56px;color:#1a1a1a">admin</div>
<svg class="a" style="left:738.5px;top:376px" width="8" height="6" viewBox="0 0 8 6"><path d="M0.5 5.5 H7.5 L4 0.5 Z" fill="#111"/></svg>
<div class="a t " style="right:383.1px;top:393.01px;text-align:right;transform-origin:100% 0;color:#222">Password:</div>
<div class="a" style="left:645.8px;top:392.1px;width:88.5px;height:13.6px;background:#efefef;border:1px solid #bcbcbc"></div>
<svg class="a" style="left:738.5px;top:396.5px" width="8" height="6" viewBox="0 0 8 6"><path d="M0.5 0.5 H7.5 L4 5.5 Z" fill="#111"/></svg>
<div class="a " style="left:555.6px;top:415px;width:193.4px;height:1px;background:#dcdcdc"></div>
<div class="a t " style="right:383.1px;top:420.71px;text-align:right;transform-origin:100% 0;color:#222">Lost Packets:</div>
<div class="a" style="left:645.4px;top:419.7px;width:103.1px;height:13.5px;background:#efefef;border:1px solid #bcbcbc"></div>
<div class="a t " style="left:648.4px;top:421.16px;color:#1a1a1a">0</div>
<div class="a t " style="right:383.1px;top:440.21px;text-align:right;transform-origin:100% 0;color:#222">Tx/Rx 10s Average:</div>
<div class="a" style="left:645.4px;top:439.6px;width:103.1px;height:12.9px;background:#efefef;border:1px solid #bcbcbc"></div>
<div class="a t " style="left:648.4px;top:440.76px;color:#1a1a1a">122.6 Mbps/0 bps</div>
<div class="a t " style="right:383.1px;top:459.71px;text-align:right;transform-origin:100% 0;color:#222">Tx/Rx Average:</div>
<div class="a" style="left:645.4px;top:459px;width:103.1px;height:13.3px;background:#efefef;border:1px solid #bcbcbc"></div>
<div class="a t " style="left:648.4px;top:460.36px;color:#1a1a1a">123.7 Mbps/0 bps</div>
<svg class="a" style="left:554.5px;top:478.3px" width="194.5" height="60.599999999999966" viewBox="0 0 194.5 60.599999999999966"><rect x="0" y="0" width="194.5" height="60.599999999999966" fill="#fff"/><line x1="5.4" y1="0" x2="5.4" y2="60.599999999999966" stroke="#d8d8d8" stroke-width="1"/><line x1="17.0" y1="0" x2="17.0" y2="60.599999999999966" stroke="#d8d8d8" stroke-width="1"/><line x1="28.7" y1="0" x2="28.7" y2="60.599999999999966" stroke="#d8d8d8" stroke-width="1"/><line x1="40.3" y1="0" x2="40.3" y2="60.599999999999966" stroke="#d8d8d8" stroke-width="1"/><line x1="51.9" y1="0" x2="51.9" y2="60.599999999999966" stroke="#d8d8d8" stroke-width="1"/><line x1="63.6" y1="0" x2="63.6" y2="60.599999999999966" stroke="#d8d8d8" stroke-width="1"/><line x1="75.2" y1="0" x2="75.2" y2="60.599999999999966" stroke="#d8d8d8" stroke-width="1"/><line x1="86.8" y1="0" x2="86.8" y2="60.599999999999966" stroke="#d8d8d8" stroke-width="1"/><line x1="98.4" y1="0" x2="98.4" y2="60.599999999999966" stroke="#d8d8d8" stroke-width="1"/><line x1="110.1" y1="0" x2="110.1" y2="60.599999999999966" stroke="#d8d8d8" stroke-width="1"/><line x1="121.7" y1="0" x2="121.7" y2="60.599999999999966" stroke="#d8d8d8" stroke-width="1"/><line x1="133.3" y1="0" x2="133.3" y2="60.599999999999966" stroke="#d8d8d8" stroke-width="1"/><line x1="145.0" y1="0" x2="145.0" y2="60.599999999999966" stroke="#d8d8d8" stroke-width="1"/><line x1="156.6" y1="0" x2="156.6" y2="60.599999999999966" stroke="#d8d8d8" stroke-width="1"/><line x1="168.2" y1="0" x2="168.2" y2="60.599999999999966" stroke="#d8d8d8" stroke-width="1"/><line x1="179.8" y1="0" x2="179.8" y2="60.599999999999966" stroke="#d8d8d8" stroke-width="1"/><line x1="191.5" y1="0" x2="191.5" y2="60.599999999999966" stroke="#d8d8d8" stroke-width="1"/><line x1="0" y1="2.1" x2="194.5" y2="2.1" stroke="#d8d8d8" stroke-width="1"/><line x1="0" y1="13.9" x2="194.5" y2="13.9" stroke="#d8d8d8" stroke-width="1"/><line x1="0" y1="25.7" x2="194.5" y2="25.7" stroke="#d8d8d8" stroke-width="1"/><line x1="0" y1="37.5" x2="194.5" y2="37.5" stroke="#d8d8d8" stroke-width="1"/><line x1="0" y1="49.3" x2="194.5" y2="49.3" stroke="#d8d8d8" stroke-width="1"/><rect x="0" y="0" width="194.5" height="1.5" fill="#707070"/><rect x="0" y="0" width="1" height="60.599999999999966" fill="#9a9a9a"/><rect x="156.80" y="5.5" width="2.46" height="55.099999999999966" fill="#acacf0"/><rect x="157.30" y="5.5" width="0.9" height="55.099999999999966" fill="#26267a"/><rect x="159.26" y="4.5" width="2.46" height="56.099999999999966" fill="#acacf0"/><rect x="159.76" y="4.5" width="0.9" height="56.099999999999966" fill="#26267a"/><rect x="161.72" y="4" width="2.46" height="56.599999999999966" fill="#acacf0"/><rect x="162.22" y="4" width="0.9" height="56.599999999999966" fill="#26267a"/><rect x="164.18" y="5" width="2.46" height="55.599999999999966" fill="#acacf0"/><rect x="164.68" y="5" width="0.9" height="55.599999999999966" fill="#26267a"/><rect x="166.64" y="5" width="2.46" height="55.599999999999966" fill="#acacf0"/><rect x="167.14" y="5" width="0.9" height="55.599999999999966" fill="#26267a"/><rect x="169.10" y="4.5" width="2.46" height="56.099999999999966" fill="#acacf0"/><rect x="169.60" y="4.5" width="0.9" height="56.099999999999966" fill="#26267a"/><rect x="171.56" y="5.5" width="2.46" height="55.099999999999966" fill="#acacf0"/><rect x="172.06" y="5.5" width="0.9" height="55.099999999999966" fill="#26267a"/><rect x="174.02" y="7" width="2.46" height="53.599999999999966" fill="#acacf0"/><rect x="174.52" y="7" width="0.9" height="53.599999999999966" fill="#26267a"/><rect x="176.48" y="4.5" width="2.46" height="56.099999999999966" fill="#acacf0"/><rect x="176.98" y="4.5" width="0.9" height="56.099999999999966" fill="#26267a"/><rect x="178.94" y="4" width="2.46" height="56.599999999999966" fill="#acacf0"/><rect x="179.44" y="4" width="0.9" height="56.599999999999966" fill="#26267a"/><rect x="181.40" y="5" width="2.46" height="55.599999999999966" fill="#acacf0"/><rect x="181.90" y="5" width="0.9" height="55.599999999999966" fill="#26267a"/><rect x="183.86" y="6.5" width="2.46" height="54.099999999999966" fill="#acacf0"/><rect x="184.36" y="6.5" width="0.9" height="54.099999999999966" fill="#26267a"/><rect x="186.32" y="10" width="2.46" height="50.599999999999966" fill="#acacf0"/><rect x="186.82" y="10" width="0.9" height="50.599999999999966" fill="#26267a"/><rect x="188.78" y="10.5" width="2.46" height="50.099999999999966" fill="#acacf0"/><rect x="189.28" y="10.5" width="0.9" height="50.099999999999966" fill="#26267a"/><rect x="191.24" y="4.5" width="2.46" height="56.099999999999966" fill="#acacf0"/><rect x="191.74" y="4.5" width="0.9" height="56.099999999999966" fill="#26267a"/><line x1="156.79999999999995" y1="2.1" x2="194.5" y2="2.1" stroke="#404080" stroke-opacity="0.25" stroke-width="1"/><line x1="156.79999999999995" y1="13.9" x2="194.5" y2="13.9" stroke="#404080" stroke-opacity="0.25" stroke-width="1"/><line x1="156.79999999999995" y1="25.7" x2="194.5" y2="25.7" stroke="#404080" stroke-opacity="0.25" stroke-width="1"/><line x1="156.79999999999995" y1="37.5" x2="194.5" y2="37.5" stroke="#404080" stroke-opacity="0.25" stroke-width="1"/><line x1="156.79999999999995" y1="49.3" x2="194.5" y2="49.3" stroke="#404080" stroke-opacity="0.25" stroke-width="1"/></svg>
<div class="a " style="left:557.3px;top:507.1px;width:79.5px;height:28.6px;background:#fff;border:1px solid #6a6a6a"></div>
<div class="a " style="left:559.5px;top:510px;width:10px;height:9.6px;background:#0a0ad0;border:1px solid #111"></div>
<div class="a " style="left:559.5px;top:523.4px;width:10px;height:8.8px;background:#e01010;border:1px solid #111"></div>
<div class="a t " style="left:571.7px;top:509.01px;color:#222">Tx:</div>
<div class="a t " style="left:588.2px;top:509.01px;color:#222">127.4 Mbps</div>
<div class="a t " style="left:571.7px;top:522.01px;color:#222">Rx:</div>
<div class="a " style="left:548px;top:544.9px;width:266.5px;height:1px;background:#c8c8c8"></div>
<div class="a t " style="left:549.5px;top:546.71px;color:#222">running...</div>
<div class="a" style="left:762.1px;top:189.7px;width:45.2px;height:17px;background:#efefef;border:1px solid #8a8a8a"><div class="a" style="left:1px;top:1px;right:1px;bottom:1px;border:1px dotted #555"></div></div>
<div class="a t " style="left:684.7px;width:200px;top:192.31px;text-align:center;transform-origin:50% 0;color:#111">Start</div>
<div class="a" style="left:762.1px;top:209.5px;width:45.2px;height:17.6px;background:#efefef;border:1px solid #333"></div>
<div class="a t " style="left:684.7px;width:200px;top:212.31px;text-align:center;transform-origin:50% 0;color:#111">Stop</div>
<div class="a" style="left:762.1px;top:229.7px;width:45.2px;height:18px;background:#efefef;border:1px solid #b2b2b2"></div>
<div class="a t " style="left:684.7px;width:200px;top:232.71px;text-align:center;transform-origin:50% 0;color:#111">Close</div></body></html>
